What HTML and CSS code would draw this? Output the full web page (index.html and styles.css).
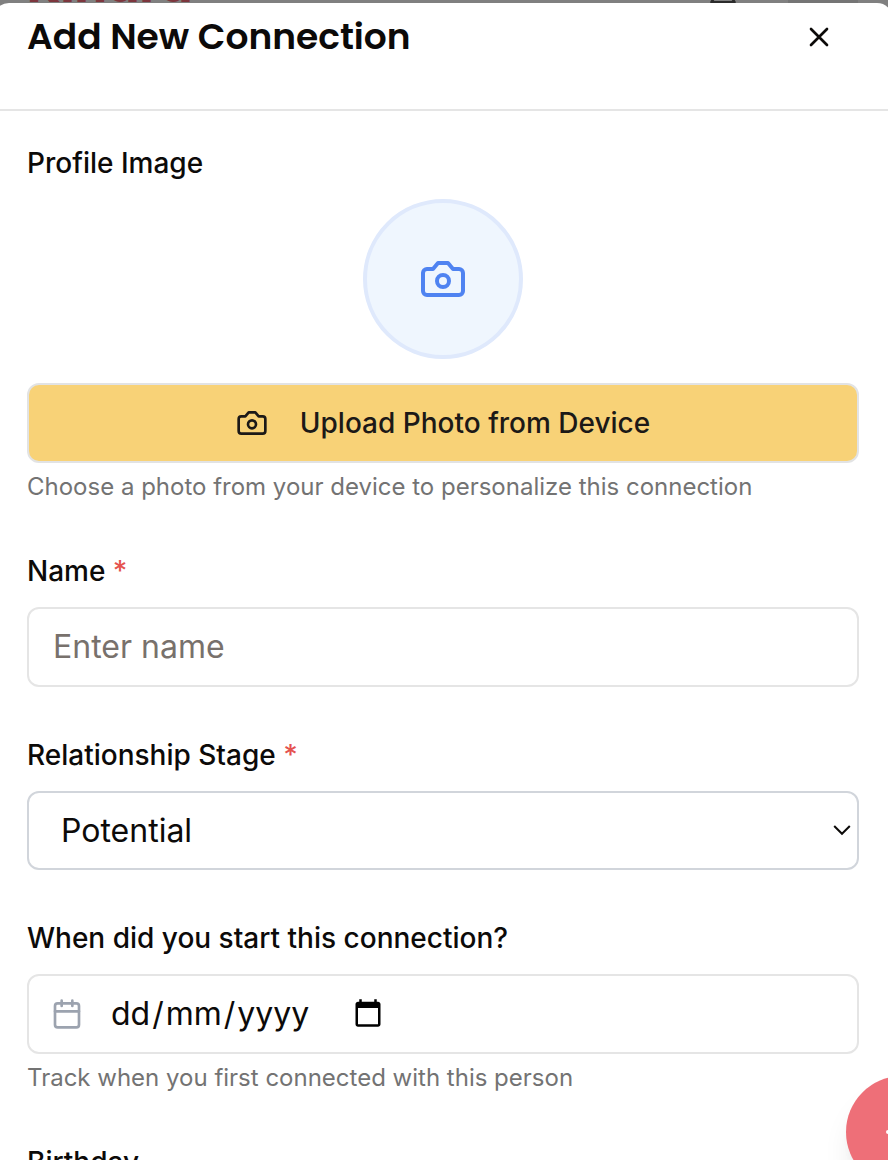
FILE: index.html
```html
<!DOCTYPE html>
<html lang="en">
<head>
<meta charset="utf-8">
<title>Add New Connection</title>
<link rel="stylesheet" href="styles.css">
</head>
<body>
<div class="backdrop">
  <span class="brand">Kindra</span>
  <svg class="bell" viewBox="0 0 26 6" fill="none" stroke="#2b2b2b" stroke-width="2.6" stroke-linecap="round" stroke-linejoin="round"><path d="M4 -2 1.5 2.2H24.5L22 -2"/></svg>
  <span class="avatar"></span>
</div>
<main class="dialog">
  <header class="header">
    <h1 class="title">Add New Connection</h1>
    <button class="close" aria-label="Close"><svg class="icon" viewBox="0 0 24 24"><path d="M18 6 6 18M6 6l12 12"/></svg></button>
  </header>
  <form class="form">
    <section class="field photo">
      <label class="label">Profile Image</label>
      <div class="preview"><svg class="icon icon-large" viewBox="0 0 24 24"><path d="M14.5 4h-5L7 7H4a2 2 0 0 0-2 2v9a2 2 0 0 0 2 2h16a2 2 0 0 0 2-2V9a2 2 0 0 0-2-2h-3l-2.5-3z"/><circle cx="12" cy="13" r="3"/></svg></div>
      <button type="button" class="upload"><svg class="icon" viewBox="0 0 24 24"><path d="M14.5 4h-5L7 7H4a2 2 0 0 0-2 2v9a2 2 0 0 0 2 2h16a2 2 0 0 0 2-2V9a2 2 0 0 0-2-2h-3l-2.5-3z"/><circle cx="12" cy="13" r="3"/></svg><span>Upload Photo from Device</span></button>
      <p class="hint">Choose a photo from your device to personalize this connection</p>
    </section>
    <section class="field name">
      <label class="label">Name <span class="required">*</span></label>
      <div class="control placeholder">Enter name</div>
    </section>
    <section class="field stage">
      <label class="label">Relationship Stage <span class="required">*</span></label>
      <div class="control select"><span>Potential</span><svg class="chevron" viewBox="0 0 18 12"><path d="m1.2 2 7.8 7.8L16.8 2"/></svg></div>
    </section>
    <section class="field start">
      <label class="label">When did you start this connection?</label>
      <div class="control date"><svg class="icon icon-muted" viewBox="0 0 24 24"><path d="M8 2v4M16 2v4M3 10h18"/><rect x="3" y="4" width="18" height="18" rx="2"/></svg><span class="date-text">dd<i>/</i>mm<i>/</i>yyyy</span><svg class="picker" viewBox="0 0 24 24"><path d="M20 3h-1V1h-2v2H7V1H5v2H4c-1.1 0-2 .9-2 2v16c0 1.1.9 2 2 2h16c1.1 0 2-.9 2-2V5c0-1.1-.9-2-2-2zm0 18H4V8h16v13z"/></svg></div>
      <p class="hint">Track when you first connected with this person</p>
    </section>
    <section class="field"><label class="label">Birthday</label></section>
  </form>
</main>
<button class="fab" aria-label="Add"><svg class="icon icon-large" viewBox="0 0 24 24"><path d="M5 12h14M12 5v14"/></svg></button>
</body>
</html>
```
FILE: styles.css
```css
* { box-sizing: border-box; }
body {
  margin: 0;
  height: 1160px;
  overflow: hidden;
  position: relative;
  background: #808080;
  color: #0c0a09;
  font-family: Inter, "Liberation Sans", sans-serif;
}
h1, p { margin: 0; }
button { padding: 0; border: 0; background: none; color: inherit; font: inherit; }
.backdrop { height: 3px; position: relative; }
.brand {
  position: absolute; left: 27px; top: -38px;
  font-family: Poppins, Inter, sans-serif;
  font-size: 48px; line-height: 48px; font-weight: 700; color: #7d363d;
}
.bell { position: absolute; left: 710px; top: 0; width: 26px; height: 6px; overflow: visible; }
.avatar { position: absolute; left: 788px; top: 0; width: 70px; height: 3px; background: #757575; }
.dialog {
  position: relative;
  height: 1157px;
  margin: 0 -5px 0 -7px;
  overflow: hidden;
  border-radius: 16px 16px 0 0;
  background: #fff;
}
.header {
  height: 108px;
  padding: 9px 58px 0 34px;
  display: flex;
  justify-content: space-between;
  align-items: flex-start;
  border-bottom: 2px solid #e5e5e5;
}
.title { font-family: Poppins, Inter, sans-serif; font-size: 36px; line-height: 50px; font-weight: 600; white-space: nowrap; }
.close { height: 50px; width: 32px; display: flex; align-items: center; }
.icon {
  width: 32px; height: 32px; flex: none;
  fill: none; stroke: currentColor; stroke-width: 2; stroke-linecap: round; stroke-linejoin: round;
}
.icon-large { width: 48px; height: 48px; }
.icon-muted { color: #9ca3af; }
.form { padding: 38px 34px 0 34px; }
.field { display: flex; flex-direction: column; }
.label { font-size: 28px; line-height: 28px; font-weight: 500; white-space: nowrap; }
.required { color: #e5534f; }
.preview {
  width: 160px; height: 160px; margin: 22px 0 24px;
  align-self: center;
  display: flex; align-items: center; justify-content: center;
  border: 4px solid #dfe9fc; border-radius: 50%;
  background: #eff6fe; color: #4f83f1;
}
.upload {
  height: 80px;
  display: flex; align-items: center; justify-content: center; gap: 32px;
  border: 2px solid #e2e3e4; border-radius: 12px;
  background: #f8d277; color: #1c1917;
  font-size: 28px; font-weight: 500;
}
.hint { margin-top: 8px; font-size: 24px; line-height: 32px; color: #737373; white-space: nowrap; }
.control {
  height: 80px; margin-top: 22px; padding: 0 24px;
  display: flex; align-items: center;
  border: 2px solid #e5e5e5; border-radius: 12px;
  font-size: 32px;
}
.placeholder { padding-bottom: 2px; color: #78716c; }
.name { margin-top: 54px; }
.stage { margin-top: 54px; }
.select { height: 79px; padding: 0 6px 0 32px; justify-content: space-between; border-color: #d1d5db; }
.chevron { width: 18px; height: 12px; margin-bottom: 2px; fill: none; stroke: #0c0a09; stroke-width: 2; }
.start { margin-top: 54px; }
.date { padding-left: 22px; }
.date-text { width: 242px; margin: 0 0 2px 28px; }
.date-text i { font-style: normal; padding: 0 2px; }
.picker { width: 30px; height: 30px; margin-bottom: 2px; fill: #000; }
.start + .field { margin-top: 54px; }
.fab {
  position: absolute; left: 846px; top: 1076px;
  width: 112px; height: 112px;
  display: flex; align-items: center; justify-content: center;
  border-radius: 50%;
  background: #ee6f78; color: #fff;
  box-shadow: 0 20px 30px -6px rgba(0, 0, 0, .1), 0 8px 12px -8px rgba(0, 0, 0, .1);
}
```
